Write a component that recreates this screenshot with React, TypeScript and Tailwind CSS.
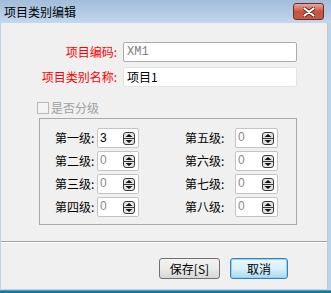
import React from "react";

const Spin = () => (
  <svg width="12" height="13" viewBox="0 0 12 13" className="block">
    <rect x="0.5" y="0.5" width="11" height="12" rx="2.5" fill="#e4e4e4" stroke="#3a3a3a" />
    <line x1="1" y1="6.5" x2="11" y2="6.5" stroke="#3a3a3a" />
    <polygon points="2.5,5 6,2 9.5,5" fill="#111" />
    <polygon points="2.5,8 9.5,8 6,11" fill="#111" />
  </svg>
);

const SpinBox = ({ v, w, dark }: { v: string; w: string; dark?: boolean }) => (
  <div className={`${w} h-[20px] bg-white border border-[#c4c4c4] rounded-[2px] flex items-start justify-between pl-[2px] pr-[3px]`}>
    <span className={`text-[12px] leading-[16px] ${dark ? "text-black mt-[1px]" : "text-[#8a8a8a]"}`} style={{ fontFamily: "'Liberation Sans', sans-serif" }}>{v}</span>
    <div className="mt-[3px]"><Spin /></div>
  </div>
);

const font = { fontFamily: "'Noto Sans CJK SC', 'Liberation Sans', sans-serif" };

export default function App() {
  const left = [["第一级:", "3"], ["第二级:", "0"], ["第三级:", "0"], ["第四级:", "0"]];
  const right = [["第五级:", "0"], ["第六级:", "0"], ["第七级:", "0"], ["第八级:", "0"]];
  return (
    <div className="w-[331px] h-[293px] flex flex-col bg-[#bcd3ec] text-[12px] text-black overflow-hidden" style={font}>
      <div className="h-[23px] flex items-start justify-between bg-gradient-to-b from-[#a2bcda] to-[#c3d7ed] pl-[4px] pr-[7px] shrink-0">
        <span className="mt-[4px] leading-[16px] text-[12px]">项目类别编辑</span>
        <div className="mt-[3px] w-[31px] h-[17px] rounded-[3px] border border-[#6e2b25] bg-gradient-to-b from-[#e7a89d] via-[#c9533f] to-[#c75a45] flex items-center justify-center">
          <svg width="12" height="10" viewBox="0 0 12 10">
            <path d="M1.5 1.5 L10.5 8.5 M10.5 1.5 L1.5 8.5" stroke="#4a2020" strokeWidth="3.6" strokeLinecap="round" />
            <path d="M1.5 1.5 L10.5 8.5 M10.5 1.5 L1.5 8.5" stroke="#fff" strokeWidth="2.2" strokeLinecap="round" />
          </svg>
        </div>
      </div>
      <div className="h-[266px] ml-[1px] mr-[3px] bg-[#f0f0f0] border-r border-[#c8c8c8] flex flex-col shrink-0">
        <div className="mt-[19px] flex items-center h-[20px]">
          <div className="w-[116px] text-right text-[#ff0000] leading-[16px]">项目编码:</div>
          <div className="ml-[6px] w-[174px] h-[20px] bg-white border border-[#acacac] rounded-[2px] pl-[3px] text-[#808080] leading-[18px]" style={{ fontFamily: "'Liberation Mono', monospace" }}>XM1</div>
        </div>
        <div className="mt-[5px] flex items-center h-[20px]">
          <div className="w-[116px] text-right text-[#ff0000] leading-[16px]">项目类别名称:</div>
          <div className="ml-[6px] w-[174px] h-[20px] bg-white border border-[#e3e3e3] rounded-[2px] pl-[3px] text-black leading-[18px]">项目1</div>
        </div>
        <div className="mt-[14px] ml-[36px] flex items-center h-[14px]">
          <div className="w-[12px] h-[12px] border border-[#b8b8b8] bg-[#f4f4f4]" />
          <span className="ml-[2px] text-[#a0a0a0] leading-[14px]">是否分级</span>
        </div>
        <div className="mt-[3px] ml-[38px] w-[258px] h-[107px] border border-[#a9a9a9] flex pt-[9px]">
          <div className="ml-[15px] flex flex-col gap-[3px]">
            {left.map(([l, v]) => (
              <div key={l} className="flex items-center h-[20px]">
                <span className="w-[40px] leading-[16px]">{l}</span>
                <div className="ml-[2px]"><SpinBox v={v} w="w-[42px]" dark={v === "3"} /></div>
              </div>
            ))}
          </div>
          <div className="ml-[46px] flex flex-col gap-[3px]">
            {right.map(([l, v]) => (
              <div key={l} className="flex items-center h-[20px]">
                <span className="w-[42px] leading-[16px]">{l}</span>
                <div className="ml-[8px]"><SpinBox v={v} w="w-[43px]" /></div>
              </div>
            ))}
          </div>
        </div>
        <div className="mt-[16px] h-[2px] border-t border-[#a0a0a0] border-b border-b-white" />
        <div className="mt-[15px] flex justify-end pr-[39px] gap-[10px]">
          <button className="w-[61px] h-[21px] rounded-[3px] border border-[#707070] bg-gradient-to-b from-[#f2f2f2] via-[#ebebeb] to-[#d6d6d6] text-[12px] leading-[16px] text-black" style={font}>保存[S]</button>
          <button className="w-[58px] h-[21px] rounded-[3px] border border-[#3c7fb1] bg-gradient-to-b from-[#eaf6fd] via-[#d9f0fc] to-[#a7d9f5] text-[12px] leading-[16px] text-black shadow-[inset_0_0_0_1px_#8fd3f7]" style={font}>取消</button>
        </div>
      </div>
      <div className="h-[1px] bg-[#bcd3ec] shrink-0" />
      <div className="h-[1px] bg-[#3aa6d0] shrink-0" />
      <div className="flex-1 bg-[#2a6f8f]" />
    </div>
  );
}
